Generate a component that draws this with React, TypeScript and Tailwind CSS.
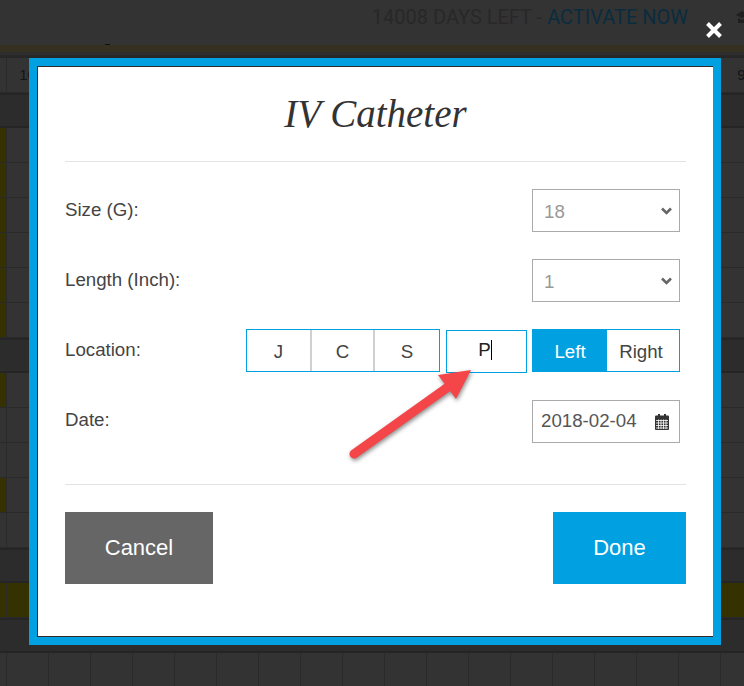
const rows = [
  "cells", "dark",
  "flag", "flag", "flag", "flag", "flag", "flag",
  "dark",
  "flag", "cells", "cells", "flag", "cells",
  "dark", "yellow", "dark", "cells",
];

const columns = Array.from({ length: 18 }, (_, i) => i);

function BackgroundRow({ kind, index }: { kind: string; index: number }) {
  if (kind === "dark") {
    return <div className="h-[35px] shrink-0 border-t-2 border-b-2 border-[#252525] bg-[#2c2c2c]" />;
  }
  return (
    <div className="flex h-[35px] shrink-0 border-b border-[#2a2a2a]">
      <div
        className={
          kind === "cells"
            ? "w-[7px] shrink-0 border-r border-[#2a2a2a] bg-[#333333]"
            : "w-[7px] shrink-0 border-r border-[#2a2a2a] bg-[#363100]"
        }
      />
      {columns.map((c) => (
        <div
          key={c}
          className={
            kind === "yellow"
              ? "flex w-[42px] shrink-0 items-center justify-center border-r border-[#2a2a2a] bg-[#363100]"
              : "flex w-[42px] shrink-0 items-center justify-center border-r border-[#2a2a2a] bg-[#333333]"
          }
        >
          {index === 0 && c === 0 && <span className="text-[15px] text-[#14141c]">10</span>}
          {index === 0 && c === 17 && <span className="text-[15px] text-[#14141c]">9</span>}
        </div>
      ))}
    </div>
  );
}

function Chevron() {
  return (
    <svg
      viewBox="0 0 12 8"
      className="pointer-events-none absolute top-[18px] right-[7px] h-[8px] w-[13px]"
    >
      <polyline points="1.5,1.5 6,6 10.5,1.5" fill="none" stroke="#666666" strokeWidth="2.6" />
    </svg>
  );
}

function SelectBox({ value }: { value: string }) {
  return (
    <div className="relative h-[43px] w-[148px]">
      <select
        defaultValue={value}
        className="h-full w-full appearance-none border border-[#aaaaaa] bg-white pt-[4px] pl-[11px] text-[18.7px] text-[#999999]"
      >
        <option value={value}>{value}</option>
      </select>
      <Chevron />
    </div>
  );
}

function CalendarIcon() {
  return (
    <svg viewBox="0 0 14 16" className="h-[16px] w-[14px]">
      <rect x="3" y="0" width="2" height="3" fill="#333333" />
      <rect x="9" y="0" width="2" height="3" fill="#333333" />
      <rect x="0" y="1.5" width="14" height="14.5" rx="1" fill="#333333" />
      <path
        d="M1 6.5h12M1 9h12M1 11.5h12M1 14h12"
        stroke="#ffffff"
        strokeWidth="0.8"
      />
      <path d="M3.5 5.5v9.5M6 5.5v9.5M8.5 5.5v9.5M11 5.5v9.5" stroke="#ffffff" strokeWidth="0.8" />
    </svg>
  );
}

function FieldRow({ label, children }: { label: string; children: React.ReactNode }) {
  return (
    <div className="flex h-[43px] items-center justify-between pr-[6px]">
      <span className="-mt-[1px] text-[18.7px] text-[#444444]">{label}</span>
      {children}
    </div>
  );
}

export default function App() {
  return (
    <div className="relative h-[686px] w-[744px] overflow-hidden bg-[#333333] font-['Liberation_Sans',Arial,sans-serif]">
      {/* dimmed page behind the modal */}
      <div className="flex h-[45px] items-start justify-end pt-[2px] pr-[56px] font-['Roboto',sans-serif] text-[20px] text-[#282828]">
        <span>14008 DAYS LEFT -&nbsp;</span>
        <span className="text-[#0b2c3f]">ACTIVATE NOW</span>
      </div>
      <div className="h-[7px] bg-[#35301f]" />
      <div className="h-[3px] bg-[#2e2e2e]" />
      <div className="h-[3px] bg-[#272727]" />
      <div className="flex flex-col">
        {rows.map((kind, i) => (
          <BackgroundRow key={i} kind={kind} index={i} />
        ))}
      </div>
      <div className="absolute top-[44px] left-[105px] h-[1px] w-[5px] bg-[#111111]" />
      <svg viewBox="0 0 12 16" className="absolute top-[10px] left-[736px] h-[16px] w-[12px]">
        <path d="M0 5 6 1l6 4-6 3zM2 8l4 2 4-2v5H2z" fill="#1f1f1f" />
      </svg>

      {/* close */}
      <svg viewBox="0 0 18 18" className="absolute top-[21px] left-[705px] h-[18px] w-[18px]">
        <path d="M2.5 2.5 15.5 15.5M15.5 2.5 2.5 15.5" stroke="#ffffff" strokeWidth="4" />
      </svg>

      {/* modal */}
      <div className="absolute top-[58px] left-[29px] h-[587px] w-[692px] border-8 border-[#00a0e1]">
        <div className="flex h-full flex-col border-t border-b border-l border-[#2b2b2b] bg-white px-[27px]">
          <h1 className="flex h-[94px] items-center justify-center font-['Liberation_Serif',serif] text-[39px] text-[#333333] italic">
            IV Catheter
          </h1>
          <div className="h-[1px] bg-[#e3e3e3]" />

          <div className="mt-[27px] flex flex-col gap-[27px]">
            <FieldRow label="Size (G):">
              <SelectBox value="18" />
            </FieldRow>
            <FieldRow label="Length (Inch):">
              <SelectBox value="1" />
            </FieldRow>
            <FieldRow label="Location:">
              <div className="flex items-start text-[18.7px] text-[#444444]">
                <div className="flex h-[43px] w-[194px] border border-[#00a0e1]">
                  <div className="flex w-[65px] items-center justify-center border-r-2 border-[#d0d0d0] pt-[4px]">J</div>
                  <div className="flex w-[63px] items-center justify-center border-r-2 border-[#d0d0d0] pt-[4px]">C</div>
                  <div className="flex flex-1 items-center justify-center pt-[4px]">S</div>
                </div>
                <div className="mt-[1px] ml-[6px] flex h-[43px] w-[81px] items-center justify-center border border-[#00a0e1] pr-[3px] pb-[2px] text-[#222222]">
                  P<span className="h-[20px] w-[1px] bg-black" />
                </div>
                <div className="ml-[5px] flex h-[43px] w-[148px] border border-[#00a0e1] text-[#444444]">
                  <div className="flex w-[74px] items-center justify-center bg-[#00a0e1] pt-[4px] text-white">Left</div>
                  <div className="flex flex-1 items-center justify-center pt-[4px] pr-[4px]">Right</div>
                </div>
              </div>
            </FieldRow>
            <FieldRow label="Date:">
              <div className="mt-[1px] flex h-[43px] w-[148px] items-center justify-between border border-[#aaaaaa] pt-[1px] pr-[10px] pl-[8px] text-[18.7px] text-[#555555]">
                <span>2018-02-04</span>
                <CalendarIcon />
              </div>
            </FieldRow>
          </div>

          <div className="mt-[42px] h-[1px] bg-[#e3e3e3]" />
          <div className="mt-[27px] flex justify-between text-[22px] text-white">
            <button className="h-[72px] w-[148px] bg-[#666666] pb-[2px]">Cancel</button>
            <button className="h-[72px] w-[133px] bg-[#00a0e1] pb-[2px]">Done</button>
          </div>
        </div>
      </div>

      {/* annotation arrow */}
      <svg
        viewBox="0 0 744 686"
        className="pointer-events-none absolute inset-0 h-[686px] w-[744px] drop-shadow-[1px_2px_2px_rgba(0,0,0,0.45)]"
      >
        <line x1="354" y1="454" x2="448" y2="387" stroke="#f44548" strokeWidth="9" strokeLinecap="round" />
        <polygon points="471,370 438,375 456,399" fill="#f44548" />
      </svg>
    </div>
  );
}
